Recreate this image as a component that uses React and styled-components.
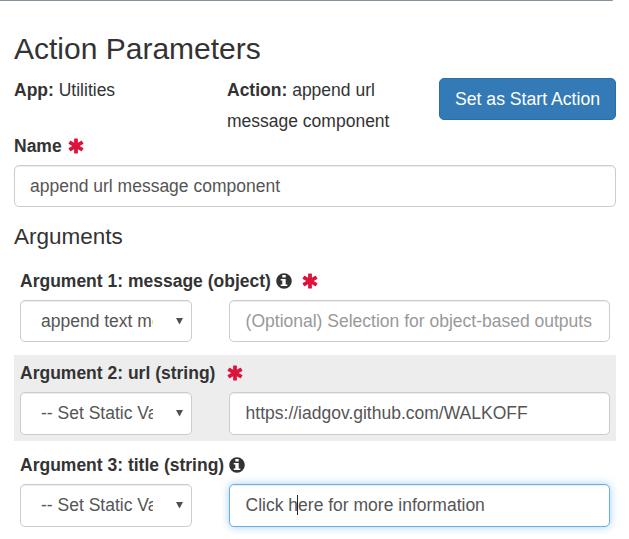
import React from 'react';
import styled, { createGlobalStyle, css } from 'styled-components';

const GlobalStyle = createGlobalStyle`
  *, *::before, *::after { box-sizing: border-box; }
  body {
    margin: 0;
    background: #fff;
    color: #333;
    font-family: "Liberation Sans", Arial, Helvetica, sans-serif;
    font-size: 17.5px;
    line-height: 31px;
    overflow: hidden;
  }
`;

const Panel = styled.main`
  width: 629px;
  height: 539px;
  overflow: hidden;
`;

const TopRule = styled.div`
  width: 613px;
  height: 1px;
  background: #84919d;
  border-bottom-right-radius: 1px;
`;

const Content = styled.form`
  padding: 28px 13px 0 14px;
`;

const Title = styled.h2`
  margin: 0;
  height: 40px;
  font-size: 30px;
  font-weight: 400;
  line-height: 40px;
`;

const Summary = styled.section`
  display: grid;
  grid-template-columns: 213px 212px 177px;
  height: 62px;
  margin-top: 6px;
`;

const Detail = styled.div`
  padding-right: 30px;
`;

const StartButton = styled.button`
  height: 42px;
  margin-top: 3px;
  padding: 0;
  border: 1px solid #2e6da4;
  border-radius: 5px;
  background: #337ab7;
  color: #fff;
  font: inherit;
  font-size: 17.65px;
  line-height: 40px;
`;

const FieldLabel = styled.label`
  display: flex;
  align-items: center;
  height: 24px;
  font-weight: 700;
  line-height: 24px;
  white-space: pre;
`;

const NameLabel = styled(FieldLabel)`
  margin-top: -3px;
`;

const Icon = styled.svg`
  flex: none;
  width: 16px;
  height: 16px;
  fill: currentColor;
`;

const InfoIcon = styled(Icon)`
  margin-left: 5px;
`;

const RequiredIcon = styled(Icon)`
  margin-left: ${({ $gap }) => $gap}px;
  color: #dc143c;
`;

const control = css`
  display: block;
  width: 100%;
  height: 100%;
  border: 1px solid #ccc;
  border-radius: 5px;
  background: #fff;
  box-shadow: inset 0 1px 1px rgba(0, 0, 0, 0.075);
  color: #555;
  font: inherit;
  line-height: normal;
  outline: none;
`;

const TextInput = styled.input`
  ${control}
  padding: 0 15px;
  &::placeholder { color: #999; opacity: 1; }
  ${({ $active }) => $active && css`
    border-color: #66afe9;
    box-shadow: inset 0 1px 1px rgba(0, 0, 0, 0.075), 0 0 8px rgba(102, 175, 233, 0.6);
  `}
`;

const ValueInput = styled(TextInput)`
  padding: 0 15.6px;
`;

const NameField = styled.div`
  height: 42px;
  margin-top: 7px;
`;

const Heading = styled.h3`
  margin: 14px 0 0;
  height: 32px;
  font-size: 22.5px;
  font-weight: 400;
  line-height: 32px;
`;

const Argument = styled.section`
  height: ${({ $height }) => $height}px;
  padding: ${({ $top }) => $top}px 6px 0;
  background: ${({ $shaded }) => ($shaded ? '#ededed' : 'transparent')};
`;

const Controls = styled.div`
  display: grid;
  grid-template-columns: 172px 381px;
  column-gap: 37px;
  height: ${({ $height }) => $height}px;
  margin-top: 7px;
`;

const InputWrap = styled.div`
  position: relative;
`;

const Caret = styled.span`
  position: absolute;
  left: 68px;
  top: 11px;
  width: 1px;
  height: 20px;
  background: #222;
`;

const SelectWrap = styled.div`
  position: relative;
`;

const Select = styled.select`
  ${control}
  appearance: none;
  padding: 0 38px 1px 20px;
`;

const Arrow = styled.svg`
  position: absolute;
  right: 9px;
  top: 17px;
  width: 7px;
  height: 8px;
  fill: #505050;
  pointer-events: none;
`;

function Required({ gap }) {
  return (
    <RequiredIcon $gap={gap} viewBox="-8 -8 16 16" aria-label="required">
      <rect x="-1.9" y="-7.5" width="3.8" height="15" rx="0.5" />
      <rect x="-1.9" y="-7.7" width="3.8" height="15.4" rx="0.5" transform="rotate(60)" />
      <rect x="-1.9" y="-7.7" width="3.8" height="15.4" rx="0.5" transform="rotate(-60)" />
    </RequiredIcon>
  );
}

function Info() {
  return (
    <InfoIcon viewBox="0 0 16 16" aria-label="info">
      <path
        fillRule="evenodd"
        d="M8 .2a7.8 7.8 0 1 1 0 15.6A7.8 7.8 0 0 1 8 .2zM6.3 2.1v2.5h3.4V2.1zM4.7 5.9v1.6h1.6v4H4.7v1.6h6.6v-1.6H9.7V5.9z"
      />
    </InfoIcon>
  );
}

function Dropdown({ value }) {
  return (
    <SelectWrap>
      <Select defaultValue={value}>
        <option value={value}>{value}</option>
      </Select>
      <Arrow viewBox="0 0 7 8"><path d="M0 1h7L3.5 7.6z" /></Arrow>
    </SelectWrap>
  );
}

export default function App() {
  return (
    <Panel>
      <GlobalStyle />
      <TopRule />
      <Content>
        <Title>Action Parameters</Title>
        <Summary>
          <Detail><b>App:</b> Utilities</Detail>
          <Detail><b>Action:</b> append url message component</Detail>
          <StartButton type="button">Set as Start Action</StartButton>
        </Summary>
        <NameLabel>Name<Required gap={6.3} /></NameLabel>
        <NameField>
          <TextInput defaultValue="append url message component" />
        </NameField>
        <Heading>Arguments</Heading>

        <Argument $height={102} $top={16}>
          <FieldLabel>Argument 1: message (object)<Info /><Required gap={10.5} /></FieldLabel>
          <Controls $height={42}>
            <Dropdown value="append text message" />
            <ValueInput placeholder="(Optional) Selection for object-based outputs" />
          </Controls>
        </Argument>

        <Argument $height={86} $top={6} $shaded>
          <FieldLabel>Argument 2: url (string)<Required gap={11.5} /></FieldLabel>
          <Controls $height={43}>
            <Dropdown value="-- Set Static Value --" />
            <ValueInput defaultValue="https://iadgov.github.com/WALKOFF" />
          </Controls>
        </Argument>

        <Argument $height={98} $top={12}>
          <FieldLabel>Argument 3: title (string)<Info /></FieldLabel>
          <Controls $height={43}>
            <Dropdown value="-- Set Static Value --" />
            <InputWrap>
              <ValueInput $active defaultValue="Click here for more information" />
              <Caret />
            </InputWrap>
          </Controls>
        </Argument>
      </Content>
    </Panel>
  );
}
